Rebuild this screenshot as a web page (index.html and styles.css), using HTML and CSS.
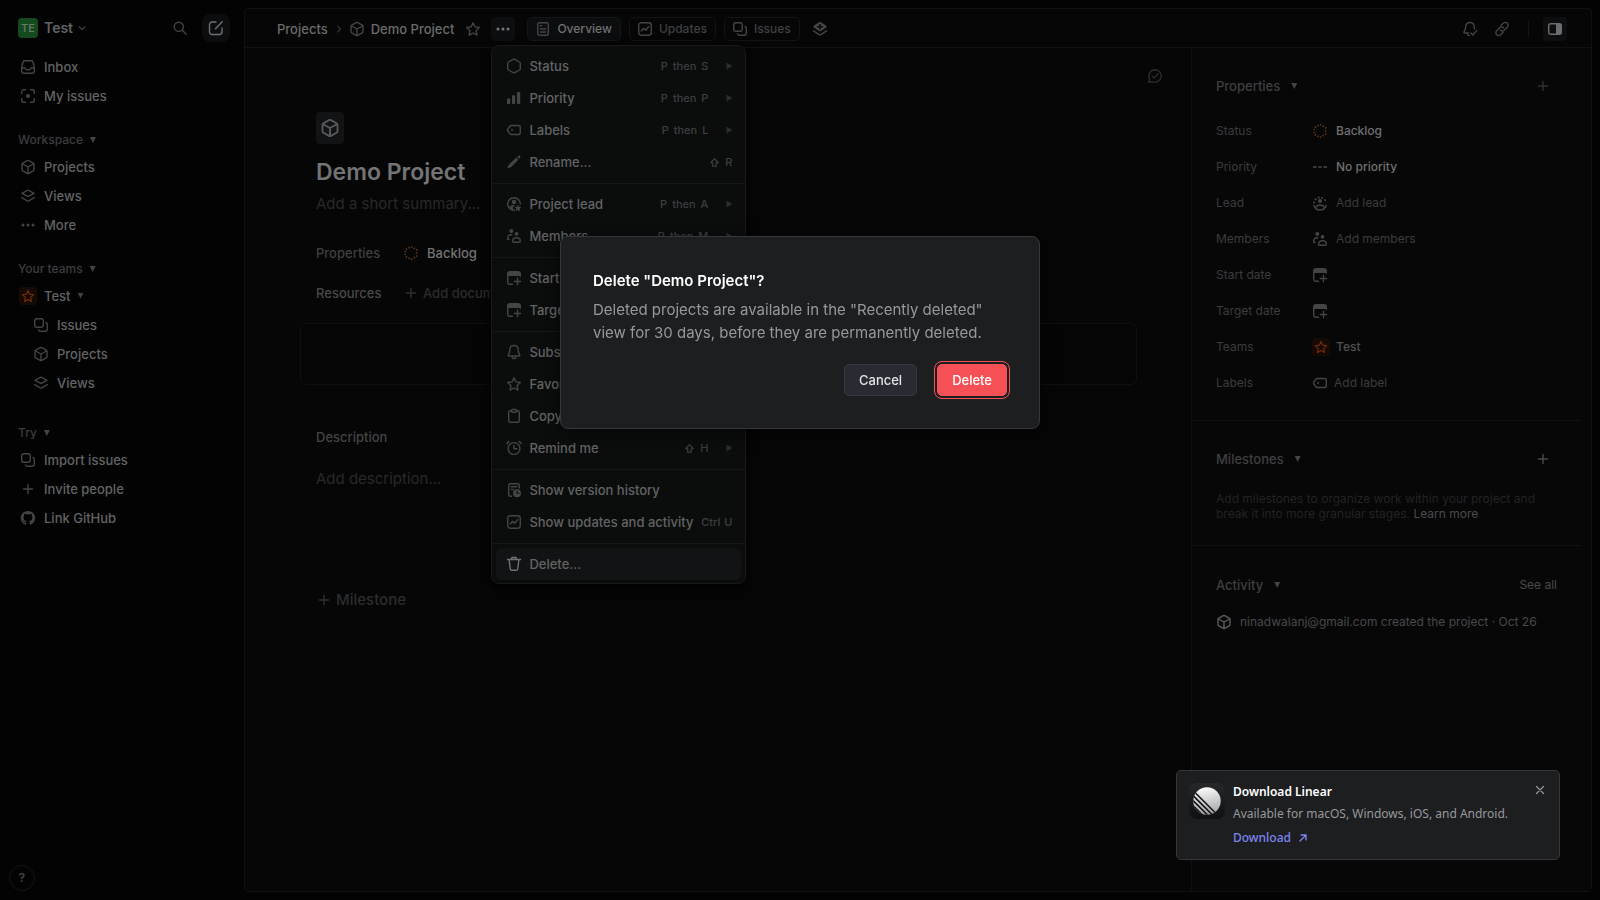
FILE: index.html
```html
<!DOCTYPE html>
<html lang="en">
<head>
<meta charset="utf-8">
<title>Demo Project</title>
<link rel="stylesheet" href="styles.css">
</head>
<body>
<svg class="sprite" aria-hidden="true">
  <symbol id="cube" viewBox="0 0 16 16"><path d="M7.2 1.7a1.6 1.6 0 0 1 1.6 0l4.4 2.5a1.5 1.5 0 0 1 .8 1.3v5a1.5 1.5 0 0 1-.8 1.3l-4.4 2.5a1.6 1.6 0 0 1-1.6 0l-4.4-2.5a1.5 1.5 0 0 1-.8-1.3v-5a1.500 1.500 0 0 1 .8-1.300zM2.500 5l5.500 3 5.500-3M8 8v6.300"/></symbol>
  <symbol id="inbox" viewBox="0 0 16 16"><path d="M4.600 1.700h6.800c.7 0 1.200.4 1.400 1l1.500 5.300v4a2.200 2.200 0 0 1-2.200 2.200H3.900A2.200 2.200 0 0 1 1.700 12V8l1.500-5.300c.2-.6.7-1 1.400-1zM1.800 9h2.700c.6 0 .8.300 1 .8.300.700.800 1 1.500 1h2c.7 0 1.200-.3 1.500-1 .2-.5.4-.8 1-.8h2.700"/></symbol>
  <symbol id="focus" viewBox="0 0 16 16"><path d="M1.700 5.500V4a2.300 2.300 0 0 1 2.300-2.300h1.500M10.500 1.700H12A2.300 2.300 0 0 1 14.300 4v1.500M14.300 10.500V12a2.300 2.300 0 0 1-2.300 2.300h-1.500M5.500 14.300H4A2.300 2.300 0 0 1 1.700 12v-1.500"/><circle class="solid" cx="8" cy="8" r="2"/></symbol>
  <symbol id="layers" viewBox="0 0 16 16"><path d="M7.300 2.300a1.500 1.500 0 0 1 1.400 0L14 5.300 8.700 8.200a1.500 1.500 0 0 1-1.400 0L2 5.300zM1.700 9.700l5.600 3.200a1.500 1.500 0 0 0 1.400 0l5.600-3.200"/></symbol>
  <symbol id="layersplus" viewBox="0 0 16 16"><path class="solid" fill-rule="evenodd" d="M7 1.300a2 2 0 0 1 2 0l5 3.200c.9.600.9 1.700 0 2.300L9 10a2 2 0 0 1-2 0L2 6.800c-.9-.6-.9-1.700 0-2.300zM7.300 3v2H5.200v1.400h2.100v2h1.400v-2h2.100V5H8.700V3z"/><path d="M1.500 9.800l5.700 3.900a1.500 1.500 0 0 0 1.600 0l5.700-3.900"/></symbol>
  <symbol id="dots" viewBox="0 0 16 16"><g class="solid"><circle cx="3" cy="8" r="1.500"/><circle cx="8" cy="8" r="1.500"/><circle cx="13" cy="8" r="1.500"/></g></symbol>
  <symbol id="copies" viewBox="0 0 16 16"><rect x="1.700" y="1.700" width="8.600" height="8.600" rx="2.200"/><path d="M13 5.500c.9.300 1.300 1 1.300 2V12a2.300 2.300 0 0 1-2.300 2.300H7.500c-1 0-1.700-.4-2-1.300"/></symbol>
  <symbol id="plus" viewBox="0 0 16 16"><path d="M8 3.500v9M3.500 8h9"/></symbol>
  <symbol id="github" viewBox="0 0 16 16"><path class="solid" d="M8 1a7 7 0 0 0-2.300 13.700c.4.100.5-.2.500-.400v-1.400c-1.900.4-2.400-.8-2.400-.8-.3-.8-.8-1-.8-1-.6-.4.100-.4.100-.4.700 0 1.100.7 1.100.7.600 1.100 1.600.8 2 .6.100-.4.200-.8.500-.9-1.600-.2-3.200-.8-3.200-3.500 0-.8.300-1.400.7-1.900-.1-.2-.3-.9.100-1.900 0 0 .6-.2 1.900.7a6.600 6.600 0 0 1 3.500 0c1.300-.9 1.900-.7 1.900-.7.400 1 .2 1.700.1 1.900.4.500.7 1.100.7 1.900 0 2.700-1.600 3.300-3.200 3.500.3.200.5.700.5 1.300v2c0 .2.100.4.500.3A7 7 0 0 0 8 1z"/></symbol>
  <symbol id="search" viewBox="0 0 16 16"><circle cx="6.800" cy="6.800" r="4.600"/><path d="M10.300 10.300l3.700 3.700"/></symbol>
  <symbol id="compose" viewBox="0 0 16 16"><path d="M8 2H4.200A2.700 2.700 0 0 0 1.500 4.700v7A2.700 2.700 0 0 0 4.200 14.500h7.100a2.700 2.700 0 0 0 2.700-2.700V8M7.500 8.700l6.700-7"/></symbol>
  <symbol id="chevron" viewBox="0 0 16 16"><path d="M4 6.200l4 3.800 4-3.800"/></symbol>
  <symbol id="star" viewBox="0 0 16 16"><path d="M8 1.800l1.900 4.100 4.400.6-3.200 3.100.8 4.500L8 12l-3.900 2.100.8-4.500L1.700 6.500l4.400-.6z"/></symbol>
  <symbol id="doc" viewBox="0 0 16 16"><rect x="2.700" y="1.700" width="10.600" height="12.600" rx="1.800"/><path d="M5.300 4.800h1.500M5.300 8h5.400M5.300 11h5.400"/></symbol>
  <symbol id="pulse" viewBox="0 0 16 16"><rect x="1.700" y="1.700" width="12.600" height="12.600" rx="2.700"/><path d="M4.300 10l2.300-2.800 2.200 2 2.900-3.700"/></symbol>
  <symbol id="bell" viewBox="0 0 16 16"><path d="M8 1.500c-2.500 0-4 1.800-4.200 4l-.3 2.900-1.200 2.500c-.3.600 0 1.100.6 1.100h10.200c.6 0 .9-.5.6-1.100l-1.200-2.500-.3-2.900c-.2-2.200-1.700-4-4.200-4zM6.200 13.500a2 2 0 0 0 3.600 0"/></symbol>
  <symbol id="bellcheck" viewBox="0 0 16 16"><path d="M12.500 8l-.4-2.700C11.800 3 10.300 1.500 8 1.500S4 3.200 3.700 5.500l-.4 3L2 10.900c-.3.600 0 1.100.6 1.100h3.900M5.500 13.500c.4.700 1 1 1.800 1M8.800 12l2 2 3.900-4.400"/></symbol>
  <symbol id="link" viewBox="0 0 16 16"><path d="M7 4.500l2.300-2.200a2.700 2.700 0 0 1 4.100.1c1 1.200.9 2.700-.1 3.800L10.300 9.300a2.600 2.600 0 0 1-3.900-.1M9 11.500l-2.300 2.200a2.700 2.700 0 0 1-4.100-.1c-1-1.200-.9-2.700.1-3.800l3-3.100a2.600 2.600 0 0 1 3.900.1"/></symbol>
  <symbol id="panel" viewBox="0 0 16 16"><rect x="1.700" y="2.700" width="12.600" height="10.600" rx="2"/><path class="solid" d="M9 2.500h3.500a2 2 0 0 1 2 2v7a2 2 0 0 1-2 2H9z"/></symbol>
  <symbol id="chatcheck" viewBox="0 0 16 16"><path d="M8 1.700a6.300 6.300 0 1 1-2.800 12l-3.300.6.7-3.200A6.300 6.300 0 0 1 8 1.700zM5.300 8.300l1.900 1.800 3.700-4.200"/></symbol>
  <symbol id="hex" viewBox="0 0 16 16"><path d="M7.200 1.300a1.600 1.600 0 0 1 1.600 0l4.700 2.700a1.500 1.500 0 0 1 .8 1.300v5.400a1.500 1.500 0 0 1-.8 1.300l-4.700 2.700a1.600 1.600 0 0 1-1.600 0L2.500 12a1.500 1.500 0 0 1-.8-1.300V5.300A1.500 1.500 0 0 1 2.500 4z"/></symbol>
  <symbol id="backlog" viewBox="0 0 16 16"><path stroke-width="1.600" stroke-dasharray="1.500 1.500" d="M8 1.600l5.700 3.200v6.400L8 14.400l-5.700-3.200V4.800z"/></symbol>
  <symbol id="bars" viewBox="0 0 16 16"><g class="solid"><rect x="1" y="8.500" width="3.200" height="5.500" rx=".8"/><rect x="6" y="5.300" width="3.200" height="8.700" rx=".8"/><rect x="11" y="2" width="3.200" height="12" rx=".8"/></g></symbol>
  <symbol id="dashes" viewBox="0 0 16 16"><g class="solid"><rect x="1" y="7.200" width="3.600" height="1.600"/><rect x="6.200" y="7.200" width="3.600" height="1.600"/><rect x="11.400" y="7.200" width="3.600" height="1.600"/></g></symbol>
  <symbol id="tag" viewBox="0 0 16 16"><path d="M5.300 3.500h6.900a2.100 2.100 0 0 1 2.100 2.100v4.800a2.100 2.100 0 0 1-2.100 2.100H5.300a2 2 0 0 1-1.500-.7L1.900 9a1.500 1.500 0 0 1 0-2l1.900-2.800a2 2 0 0 1 1.500-.7z"/><circle class="solid" cx="6" cy="8" r="1"/></symbol>
  <symbol id="pencil" viewBox="0 0 16 16"><path class="solid" d="M10.300 3.600l2.100 2.100-7.200 7.200-3.600 1.400c-.3.100-.5-.1-.4-.4l1.700-3.200zM11.200 2.800l.9-.9c.5-.5 1.200-.5 1.700 0l.3.300c.5.500.5 1.200 0 1.700l-.9.900z"/></symbol>
  <symbol id="lead" viewBox="0 0 16 16"><path d="M8.500 14.300A6.300 6.300 0 1 1 14.300 8M3.500 12.300c.8-1.800 2.300-2.700 4.600-2.500"/><circle class="solid" cx="8" cy="6" r="2.200"/><path class="solid" d="M12 8.700l1 2.100 2.400.3-1.700 1.600.4 2.400-2.100-1.200-2.100 1.200.4-2.400-1.700-1.600 2.400-.3zM5.700 10.700l1.300-.6v4l-2.800-1z"/></symbol>
  <symbol id="addlead" viewBox="0 0 16 16"><path stroke-dasharray="0.400 3.100" stroke-width="1.800" d="M1.900 7.500a6.200 6.200 0 0 1 12.200 0"/><circle class="solid" cx="8" cy="6" r="2"/><path d="M1.900 10.500a6.400 6.400 0 0 0 12.200 0M3.700 12.500c.8-1.700 2.300-2.500 4.300-2.500s3.500.8 4.300 2.500"/></symbol>
  <symbol id="members" viewBox="0 0 16 16"><circle class="solid" cx="5.300" cy="2.900" r="2"/><circle class="solid" cx="10.500" cy="5.800" r="1.900"/><path d="M1.700 11.200H3M1.700 11.200c-.2-2.900.8-4.400 3.500-4.400h.6M6.700 12.800c0-2 1.400-3 3.800-3s3.800 1 3.800 3c0 1-.5 1.500-1.400 1.500H8.100c-.9 0-1.400-.5-1.400-1.500z"/></symbol>
  <symbol id="calplus" viewBox="0 0 16 16"><path class="solid" d="M4 1h8a3 3 0 0 1 3 3v2H1V4a3 3 0 0 1 3-3z"/><path d="M1.700 5v7A2.300 2.300 0 0 0 4 14.300h2.500M14.300 5v1.200M11.500 8.300v6.400M8.300 11.500h6.400"/></symbol>
  <symbol id="clipboard" viewBox="0 0 16 16"><path d="M5.500 2.700H4.200c-.8 0-1.500.6-1.500 1.500v8.600c0 .9.700 1.500 1.500 1.500h7.600c.8 0 1.500-.6 1.500-1.500V4.200c0-.9-.7-1.500-1.500-1.500h-1.300"/><rect x="5.500" y="1.500" width="5" height="2.700" rx="1"/></symbol>
  <symbol id="alarm" viewBox="0 0 16 16"><circle cx="8" cy="8.500" r="5.900"/><path d="M8 5.500v3.300h3M1 3.700c.4-1 1-1.700 2-2.200M15 3.700c-.4-1-1-1.700-2-2.200"/></symbol>
  <symbol id="history" viewBox="0 0 16 16"><path d="M13.300 6V3.500c0-1.100-.7-1.800-1.800-1.800h-7c-1.100 0-1.800.7-1.800 1.800v9c0 1.100.7 1.800 1.800 1.800h1M5.300 4.800h5.400M5.300 7.500h2"/><path class="solid" fill-rule="evenodd" d="M11 7.300a4 4 0 1 1 0 8 4 4 0 0 1 0-8zm-.5 1.500v3h2.700v-1h-1.600v-2z"/></symbol>
  <symbol id="trash" viewBox="0 0 16 16"><path d="M1.500 3.500h13M5.500 3.300l.4-1.800h4.200l.4 1.800M3.200 4l1 8.700c.1 1 .7 1.600 1.700 1.600h4.200c1 0 1.600-.6 1.700-1.600l1-8.700"/></symbol>
  <symbol id="shift" viewBox="0 0 16 16"><path d="M8 2.500l5.500 5.800h-3v5.200h-5V8.300h-3z"/></symbol>
  <symbol id="close" viewBox="0 0 16 16"><path d="M4 4l8 8M12 4l-8 8"/></symbol>
  <symbol id="external" viewBox="0 0 16 16"><path d="M4 12l7.500-7.500M5.500 4h6.500v6.500"/></symbol>
</svg>

<div class="app">
  <nav class="sidebar" aria-label="Main">
    <div class="side-head">
      <button class="workspace"><span class="avatar">TE</span>Test<svg class="icon small"><use href="#chevron"/></svg></button>
      <button class="plain" aria-label="Search"><svg class="icon"><use href="#search"/></svg></button>
      <button class="compose" aria-label="New issue"><svg class="icon"><use href="#compose"/></svg></button>
    </div>
    <div class="nav-group">
      <a class="nav-item" href="#"><svg class="icon"><use href="#inbox"/></svg>Inbox</a>
      <a class="nav-item" href="#"><svg class="icon"><use href="#focus"/></svg>My issues</a>
    </div>
    <div class="nav-group spaced">
      <button class="nav-title">Workspace<span class="tri"></span></button>
      <a class="nav-item" href="#"><svg class="icon"><use href="#cube"/></svg>Projects</a>
      <a class="nav-item" href="#"><svg class="icon"><use href="#layers"/></svg>Views</a>
      <a class="nav-item" href="#"><svg class="icon"><use href="#dots"/></svg>More</a>
    </div>
    <div class="nav-group spaced">
      <button class="nav-title">Your teams<span class="tri"></span></button>
      <a class="nav-item team" href="#"><span class="team-icon"><svg class="icon"><use href="#star"/></svg></span>Test<span class="tri"></span></a>
      <a class="nav-item sub" href="#"><svg class="icon"><use href="#copies"/></svg>Issues</a>
      <a class="nav-item sub" href="#"><svg class="icon"><use href="#cube"/></svg>Projects</a>
      <a class="nav-item sub" href="#"><svg class="icon"><use href="#layers"/></svg>Views</a>
    </div>
    <div class="nav-group far">
      <button class="nav-title">Try<span class="tri"></span></button>
      <a class="nav-item" href="#"><svg class="icon"><use href="#copies"/></svg>Import issues</a>
      <a class="nav-item" href="#"><svg class="icon"><use href="#plus"/></svg>Invite people</a>
      <a class="nav-item" href="#"><svg class="icon"><use href="#github"/></svg>Link GitHub</a>
    </div>
    <button class="help" aria-label="Help">?</button>
  </nav>

  <div class="panel">
    <header class="topbar">
      <a class="crumb" href="#">Projects</a>
      <svg class="icon small crumb-sep"><use href="#chevron"/></svg>
      <a class="crumb current" href="#"><svg class="icon"><use href="#cube"/></svg>Demo Project</a>
      <button class="plain fav" aria-label="Favorite"><svg class="icon"><use href="#star"/></svg></button>
      <div class="menu-anchor">
        <button class="more" aria-label="Project actions" aria-expanded="true"><svg class="icon"><use href="#dots"/></svg></button>
        <div class="menu" role="menu">
          <div class="menu-group">
            <button class="menu-item" role="menuitem"><svg class="icon"><use href="#hex"/></svg><span>Status</span><kbd><b>P</b><b>then</b><b>S</b></kbd><i class="arrow"></i></button>
            <button class="menu-item" role="menuitem"><svg class="icon"><use href="#bars"/></svg><span>Priority</span><kbd><b>P</b><b>then</b><b>P</b></kbd><i class="arrow"></i></button>
            <button class="menu-item" role="menuitem"><svg class="icon"><use href="#tag"/></svg><span>Labels</span><kbd><b>P</b><b>then</b><b>L</b></kbd><i class="arrow"></i></button>
            <button class="menu-item" role="menuitem"><svg class="icon"><use href="#pencil"/></svg><span>Rename...</span><kbd><svg class="icon key"><use href="#shift"/></svg><b>R</b></kbd></button>
          </div>
          <div class="menu-group">
            <button class="menu-item" role="menuitem"><svg class="icon"><use href="#lead"/></svg><span>Project lead</span><kbd><b>P</b><b>then</b><b>A</b></kbd><i class="arrow"></i></button>
            <button class="menu-item" role="menuitem"><svg class="icon"><use href="#members"/></svg><span>Members</span><kbd><b>P</b><b>then</b><b>M</b></kbd><i class="arrow"></i></button>
          </div>
          <div class="menu-group">
            <button class="menu-item" role="menuitem"><svg class="icon"><use href="#calplus"/></svg><span>Start date</span></button>
            <button class="menu-item" role="menuitem"><svg class="icon"><use href="#calplus"/></svg><span>Target date</span></button>
          </div>
          <div class="menu-group">
            <button class="menu-item" role="menuitem"><svg class="icon"><use href="#bell"/></svg><span>Subscribe</span></button>
            <button class="menu-item" role="menuitem"><svg class="icon"><use href="#star"/></svg><span>Favorite</span></button>
            <button class="menu-item" role="menuitem"><svg class="icon"><use href="#clipboard"/></svg><span>Copy</span></button>
            <button class="menu-item" role="menuitem"><svg class="icon"><use href="#alarm"/></svg><span>Remind me</span><kbd><svg class="icon key"><use href="#shift"/></svg><b>H</b></kbd><i class="arrow"></i></button>
          </div>
          <div class="menu-group">
            <button class="menu-item" role="menuitem"><svg class="icon"><use href="#history"/></svg><span>Show version history</span></button>
            <button class="menu-item" role="menuitem"><svg class="icon"><use href="#pulse"/></svg><span>Show updates and activity</span><kbd class="chord"><b>Ctrl</b><b>U</b></kbd></button>
          </div>
          <div class="menu-group">
            <button class="menu-item active" role="menuitem"><svg class="icon"><use href="#trash"/></svg><span>Delete...</span></button>
          </div>
        </div>
      </div>
      <div class="tabs">
        <button class="tab selected"><svg class="icon"><use href="#doc"/></svg>Overview</button>
        <button class="tab"><svg class="icon"><use href="#pulse"/></svg>Updates</button>
        <button class="tab"><svg class="icon"><use href="#copies"/></svg>Issues</button>
        <button class="plain add-view" aria-label="Add view"><svg class="icon"><use href="#layersplus"/></svg></button>
      </div>
      <div class="top-actions">
        <button class="plain" aria-label="Notifications"><svg class="icon"><use href="#bellcheck"/></svg></button>
        <button class="plain" aria-label="Copy link"><svg class="icon"><use href="#link"/></svg></button>
        <span class="divider"></span>
        <button class="toggle" aria-label="Toggle details"><svg class="icon"><use href="#panel"/></svg></button>
      </div>
    </header>

    <div class="body">
      <main class="content">
        <button class="plain resolve" aria-label="Comments"><svg class="icon"><use href="#chatcheck"/></svg></button>
        <div class="project">
          <button class="project-icon" aria-label="Project icon"><svg class="icon"><use href="#cube"/></svg></button>
          <h1>Demo Project</h1>
          <input class="ghost summary" aria-label="Summary" placeholder="Add a short summary...">
          <div class="line"><span class="line-label">Properties</span><button class="value"><svg class="icon orange"><use href="#backlog"/></svg>Backlog</button></div>
          <div class="line"><span class="line-label strong">Resources</span><button class="value add"><svg class="icon"><use href="#plus"/></svg>Add document or link...</button></div>
        </div>
        <div class="update-box"></div>
        <div class="project">
          <label class="desc-label" for="desc">Description</label>
          <input class="ghost desc" id="desc" placeholder="Add description...">
          <button class="milestone"><svg class="icon"><use href="#plus"/></svg>Milestone</button>
        </div>
      </main>

      <aside class="details">
        <section class="card">
          <div class="card-head"><h2>Properties<span class="tri"></span></h2><button class="plain" aria-label="Add property"><svg class="icon"><use href="#plus"/></svg></button></div>
          <dl class="props">
            <dt>Status</dt><dd class="set"><svg class="icon orange"><use href="#backlog"/></svg>Backlog</dd>
            <dt>Priority</dt><dd class="set"><svg class="icon"><use href="#dashes"/></svg>No priority</dd>
            <dt>Lead</dt><dd><svg class="icon"><use href="#addlead"/></svg>Add lead</dd>
            <dt>Members</dt><dd><svg class="icon"><use href="#members"/></svg>Add members</dd>
            <dt>Start date</dt><dd><svg class="icon"><use href="#calplus"/></svg></dd>
            <dt>Target date</dt><dd><svg class="icon"><use href="#calplus"/></svg></dd>
            <dt>Teams</dt><dd class="team-value"><span class="team-icon"><svg class="icon"><use href="#star"/></svg></span>Test</dd>
            <dt>Labels</dt><dd class="label-value"><svg class="icon"><use href="#tag"/></svg>Add label</dd>
          </dl>
        </section>
        <section class="card">
          <div class="card-head"><h2>Milestones<span class="tri"></span></h2><button class="plain bright" aria-label="Add milestone"><svg class="icon"><use href="#plus"/></svg></button></div>
          <p class="hint">Add milestones to organize work within your project and break it into more granular stages. <a href="#">Learn more</a></p>
        </section>
        <section class="card">
          <div class="card-head"><h2>Activity<span class="tri"></span></h2><a class="see-all" href="#">See all</a></div>
          <p class="event"><svg class="icon"><use href="#cube"/></svg>ninadwalanj@gmail.com created the project · Oct 26</p>
        </section>
      </aside>
    </div>
  </div>
</div>

<div class="overlay">
  <div class="dialog" role="dialog" aria-modal="true" aria-labelledby="dialog-title">
    <h2 id="dialog-title">Delete "Demo Project"?</h2>
    <p>Deleted projects are available in the "Recently deleted" view for 30 days, before they are permanently deleted.</p>
    <div class="dialog-actions">
      <button class="btn">Cancel</button>
      <button class="btn danger">Delete</button>
    </div>
  </div>
</div>

<div class="toast" role="status">
  <svg class="app-logo" viewBox="0 0 36 36" aria-hidden="true">
    <defs>
      <linearGradient id="tile" x1="0" y1="0" x2="0" y2="1"><stop offset="0" stop-color="#27282a"/><stop offset="1" stop-color="#0f1011"/></linearGradient>
      <linearGradient id="ball" x1="0.400" y1="0" x2="0.600" y2="1"><stop offset="0" stop-color="#fafafa"/><stop offset="1" stop-color="#a5a5a8"/></linearGradient>
      <clipPath id="round"><circle cx="18" cy="18" r="13.700"/></clipPath>
    </defs>
    <rect width="36" height="36" rx="8" fill="url(#tile)"/>
    <circle cx="18" cy="18" r="13.700" fill="url(#ball)"/>
    <g clip-path="url(#round)" stroke="#18191a" stroke-width="1.700"><path d="M5 8.500l22 22M3 11.500l22 22M2 15.500l20 20M1 19.500l18 18"/></g>
  </svg>
  <div class="toast-text">
    <strong>Download Linear</strong>
    <p>Available for macOS, Windows, iOS, and Android.</p>
    <a href="#">Download<svg class="icon"><use href="#external"/></svg></a>
  </div>
  <button class="plain dismiss" aria-label="Close"><svg class="icon"><use href="#close"/></svg></button>
</div>
</body>
</html>
```

FILE: styles.css
```css
* { box-sizing: border-box; }

body {
  margin: 0;
  background: #030303;
  color: #626364;
  font-family: Inter, "Liberation Sans", sans-serif;
  font-size: 13px;
  font-weight: 500;
  line-height: 16px;
}

button, input {
  margin: 0;
  padding: 0;
  border: 0;
  background: none;
  color: inherit;
  font: inherit;
  text-align: left;
}

a { color: inherit; text-decoration: none; }
h1, h2, p, dl, dd { margin: 0; }

.sprite { position: absolute; width: 0; height: 0; }

.icon {
  flex: none;
  display: block;
  width: 16px;
  height: 16px;
  fill: none;
  stroke: currentColor;
  stroke-width: 1.4;
  stroke-linecap: round;
  stroke-linejoin: round;
  color: #434446;
}
.icon.small { width: 12px; height: 12px; }
.icon.orange { color: #5e3617; stroke-linecap: butt; }
.solid { fill: currentColor; stroke: none; }

.tri {
  width: 6px;
  height: 6px;
  background: #434446;
  clip-path: polygon(0 0, 100% 0, 50% 100%);
}

.plain { display: flex; align-items: center; justify-content: center; }

.app {
  display: flex;
  height: 100vh;
  padding: 8px 8px 8px 0;
}

/* Sidebar */
.sidebar {
  flex: none;
  display: flex;
  flex-direction: column;
  width: 244px;
  padding: 6px 14px 0 18px;
}
.side-head { display: flex; align-items: center; height: 28px; margin-bottom: 10px; }
.workspace { display: flex; align-items: center; font-size: 14px; font-weight: 600; margin-right: auto; }
.avatar {
  width: 20px;
  height: 20px;
  margin-right: 6px;
  border-radius: 4px;
  background: #144a1e;
  color: #6c7a6e;
  font-size: 11px;
  font-weight: 500;
  line-height: 20px;
  text-align: center;
}
.workspace .icon { margin-left: 3px; }
.compose {
  display: flex;
  align-items: center;
  justify-content: center;
  width: 28px;
  height: 28px;
  margin-left: 14px;
  border-radius: 8px;
  background: #0c0d0f;
}
.compose .icon { color: #707173; }

.spaced { margin-top: 18px; }
.far { margin-top: 24px; }
.nav-item { display: flex; align-items: center; gap: 8px; height: 29px; padding-left: 2px; }
.nav-item.sub { padding-left: 15px; }
.nav-item.team { padding-left: 1px; gap: 7px; }
.nav-title { display: flex; align-items: center; gap: 7px; height: 24px; font-size: 12px; color: #3c3d3f; }
.team-icon {
  display: flex;
  align-items: center;
  justify-content: center;
  width: 18px;
  height: 18px;
  border-radius: 4px;
  background: #160a05;
}
.team-icon .icon { width: 14px; height: 14px; color: #6e2a0c; }
.help {
  width: 26px;
  height: 26px;
  margin: auto 0 1px -9px;
  border: 1px solid #141516;
  border-radius: 50%;
  color: #4c4d4f;
  font-size: 12px;
  text-align: center;
  line-height: 24px;
}

/* Main panel */
.panel {
  flex: 1;
  min-width: 0;
  display: flex;
  flex-direction: column;
  border: 1px solid #101112;
  border-radius: 4px;
  background: #060606;
}
.topbar {
  flex: none;
  display: flex;
  align-items: center;
  height: 39px;
  padding: 2px 24px 0 32px;
  border-bottom: 1px solid #101112;
}
.crumb { display: flex; align-items: center; gap: 6px; color: #6a6b6d; }
.crumb-sep { margin: 0 4px 0 5px; transform: rotate(-90deg); }
.fav { margin: 0 10px 0 11px; }
.menu-anchor { position: relative; }
.more, .toggle {
  display: flex;
  align-items: center;
  justify-content: center;
  width: 24px;
  height: 24px;
  border-radius: 4px;
  background: #0d0e10;
}
.more .icon { color: #77787a; }
.toggle { margin-left: -2px; }
.toggle .icon { color: #6c6d6f; }
.tabs { display: flex; align-items: center; gap: 8px; margin-left: 12px; }
.tab {
  display: flex;
  align-items: center;
  gap: 6px;
  height: 24px;
  padding: 0 8px 0 7px;
  border: 1px solid #121314;
  border-radius: 5px;
  color: #3f4042;
  font-size: 12px;
}
.tab.selected { background: #0c0d0f; border-color: #141618; color: #707173; }
.add-view { margin-left: 4px; }
.top-actions { display: flex; align-items: center; gap: 16px; margin-left: auto; }
.divider { width: 1px; height: 16px; margin-left: 2px; background: #121314; }

.body { flex: 1; display: flex; min-height: 0; }
.content { flex: 1; position: relative; min-width: 0; padding: 64px 54px 0 55px; }
.resolve { position: absolute; top: 20px; right: 28px; }
.resolve .icon { color: #2b2c2e; }
.project { padding-left: 16px; }
.project-icon {
  display: flex;
  align-items: center;
  justify-content: center;
  width: 28px;
  height: 32px;
  border-radius: 4px;
  background: #121314;
}
.project-icon .icon { width: 20px; height: 20px; color: #58595b; stroke-width: 1.5; }
h1 { margin-top: 12px; color: #737475; font-size: 23px; font-weight: 600; line-height: 32px; }
.ghost { display: block; width: 100%; outline: none; font-weight: 400; font-size: 15px; line-height: 24px; color: #636466; }
.ghost::placeholder { color: #28292b; opacity: 1; }
.summary { margin: 4px 0 21px; height: 24px; }
.line { display: flex; align-items: center; height: 40px; margin-top: -4px; margin-bottom: 4px; }
.line-label { width: 87px; color: #3f4042; }
.line-label.strong { color: #48494b; }
.value { display: flex; align-items: center; gap: 8px; color: #727375; }
.value.add { gap: 4px; color: #2b2c2e; font-weight: 500; }
.value.add .icon { color: #303133; }
.update-box { height: 62px; margin-top: 10px; border: 1px solid #0e0f10; border-radius: 6px; background: #050505; }
.desc-label { display: block; margin-top: 44px; color: #434446; }
.desc { height: 24px; margin-top: 22px; }
.milestone { display: flex; align-items: center; gap: 4px; margin-top: 101px; font-size: 15px; line-height: 16px; color: #2c2d2f; }
.milestone .icon { color: #303133; }

/* Details */
.details { flex: none; width: 400px; padding-right: 10px; border-left: 1px solid #101112; background: #070707; }
.card { padding: 26px 24px 0; border-bottom: 1px solid #101112; }
.card:last-child { padding-top: 27px; border-bottom: 0; }
.card-head { display: flex; align-items: center; justify-content: space-between; height: 24px; padding-right: 6px; }
.card-head h2 { display: flex; align-items: center; gap: 11px; color: #3e3f41; font-size: 13px; font-weight: 500; line-height: 24px; }
.card-head .icon { color: #303133; }
.card-head .bright .icon { color: #48494b; }
.props { display: grid; grid-template-columns: 96px 1fr; grid-auto-rows: 36px; align-items: center; padding: 15px 0 19px; font-size: 12px; color: #3b3c3e; }
.props dt { font-weight: 400; }
.props dd { display: flex; align-items: center; gap: 8px; font-weight: 400; }
.props .set { color: #707173; font-weight: 500; }
.props .team-value { gap: 6px; color: #505153; font-weight: 500; }
.props .label-value { gap: 6px; }
.hint { margin: 20px 0 24px; font-size: 12px; font-weight: 400; line-height: 15px; color: #222325; }
.hint a { color: #4a4b4d; }
.see-all { margin-right: -20px; font-size: 12px; font-weight: 400; color: #48494b; }
.card:last-child .card-head { padding-right: 20px; }
.event { display: flex; align-items: center; gap: 8px; margin-top: 17px; font-size: 12px; font-weight: 400; color: #48494b; }
.event .icon { color: #5a5b5d; }

/* Actions menu */
.menu {
  position: absolute;
  z-index: 1;
  top: 28px;
  left: 0;
  width: 255px;
  border: 1px solid #17191a;
  border-radius: 8px;
  background: #0b0d0d;
  box-shadow: 0 4px 12px #000000;
}
.menu-group { padding: 4px 4px 5px; }
.menu-group + .menu-group { border-top: 1px solid #151718; }
.menu-group:last-child { padding-bottom: 3px; }
.menu-item {
  display: flex;
  align-items: center;
  width: 100%;
  height: 32px;
  padding: 0 9px 0 10px;
  border-radius: 6px;
  white-space: nowrap;
}
.menu-item span { margin: 0 auto 0 7px; }
.menu-item.active { background: #121315; }
.menu-item.active .icon { color: #707173; }
kbd { display: flex; align-items: center; gap: 5px; font: 500 11px/16px Inter, sans-serif; color: #3d3e40; }
kbd.chord { gap: 4px; }
kbd b { font-weight: 500; }
.icon.key { width: 11px; height: 11px; stroke-width: 1.6; }
.arrow { width: 6px; height: 7px; margin-left: 18px; background: #2c2d2f; clip-path: polygon(0 0, 100% 50%, 0 100%); }

/* Dialog */
.overlay {
  position: fixed;
  z-index: 2;
  inset: 0;
  display: flex;
  align-items: flex-start;
  justify-content: center;
  padding: 236px 24px 24px;
}
.dialog {
  width: 480px;
  padding: 32px;
  border: 1px solid #36373d;
  border-radius: 8px;
  background: #1d1e20;
  box-shadow: 0 4px 16px #00000080;
}
.dialog h2 { margin-bottom: 5px; color: #ffffff; font-size: 15px; font-weight: 600; line-height: 24px; }
.dialog p { color: #97989c; font-size: 15px; font-weight: 400; line-height: 23px; }
.dialog-actions { display: flex; justify-content: flex-end; gap: 20px; margin-top: 20px; }
.btn {
  height: 32px;
  padding: 0 14px;
  border: 1px solid #35373d;
  border-radius: 5px;
  background: #292b32;
  color: #e3e4e6;
}
.btn.danger { border-color: #f55055; background: #f55055; color: #ffffff; outline: 1px solid #f55055; outline-offset: 2px; }

/* Download notice */
.toast {
  position: fixed;
  z-index: 3;
  right: 40px;
  bottom: 40px;
  display: flex;
  gap: 8px;
  width: 384px;
  padding: 12px;
  border: 1px solid #36373d;
  border-radius: 5px;
  background: #1d1e20;
  font-family: "Noto Sans", "Open Sans", sans-serif;
  font-size: 12px;
  line-height: 18px;
}
.app-logo { flex: none; width: 36px; height: 36px; }
.toast-text { flex: 1; color: #97989c; font-weight: 400; }
.toast-text strong { display: block; color: #ffffff; font-weight: 600; }
.toast-text p { margin: 4px 0 6px; white-space: nowrap; }
.toast-text a { display: flex; align-items: center; gap: 6px; color: #7d84f0; font-weight: 500; }
.toast-text .icon { width: 12px; height: 12px; color: #7d84f0; stroke-width: 1.8; }
.dismiss { align-self: flex-start; }
.dismiss .icon { width: 14px; height: 14px; color: #97989c; }
```
